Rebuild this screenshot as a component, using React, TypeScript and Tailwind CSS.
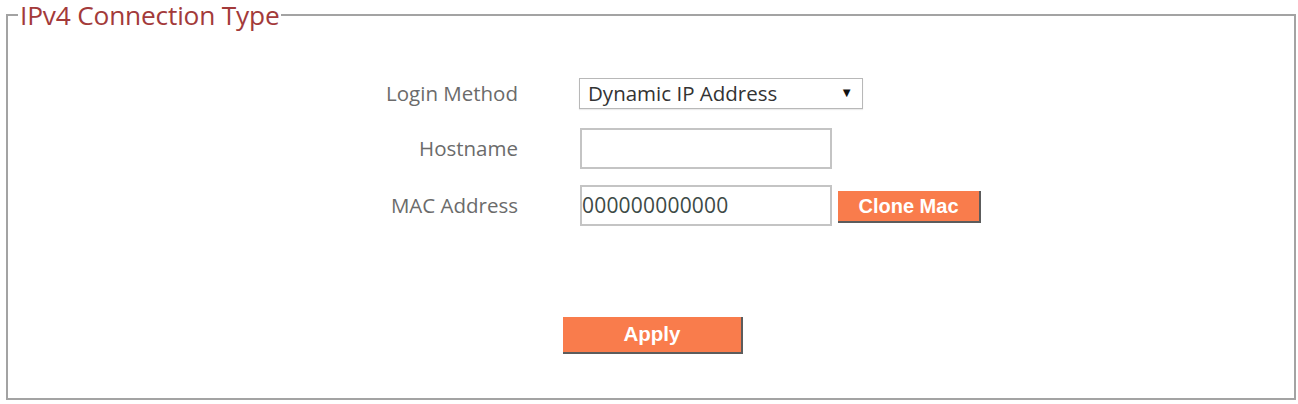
import React from 'react';

export default function App() {
  return (
    <div className="w-[1298px] h-[404px] bg-white pl-[6px] font-['Open_Sans',sans-serif]">
      <fieldset className="w-[1290px] h-[400px] border-2 border-[#a3a3a3] m-0 p-0">
        <legend className="ml-[10px] px-[2px] text-[26.3px] leading-[30px] tracking-[-0.2px] text-[#a33a3a]">
          IPv4 Connection Type
        </legend>

        <div className="mt-[48px] flex items-center h-[30px]">
          <div className="w-[510px] text-right text-[20.5px] text-[#6b6b6b]">Login Method</div>
          <div className="ml-[61px] w-[284px] h-[31px] border border-[#b8b8b8] flex items-center justify-between pl-[8px] pr-[9px] text-[20.5px] text-[#333] shadow-[0_1px_1px_rgba(0,0,0,0.08)]">
            <span>Dynamic IP Address</span>
            <span className="text-[13px] text-[#111]">▼</span>
          </div>
        </div>

        <div className="mt-[20px] flex items-center h-[41px]">
          <div className="w-[510px] text-right text-[20.5px] text-[#6b6b6b]">Hostname</div>
          <div className="ml-[62px] w-[252px] h-[41px] border-2 border-[#c4c4c4] bg-white" />
        </div>

        <div className="mt-[16px] flex items-center h-[41px]">
          <div className="w-[510px] text-right text-[20.5px] text-[#6b6b6b]">MAC Address</div>
          <div className="ml-[62px] w-[252px] h-[41px] border-2 border-[#c4c4c4] bg-white flex items-center text-[21px] text-[#3d4a46] tracking-[0.2px]">
            000000000000
          </div>
          <button className="ml-[6px] mt-[2px] w-[143px] h-[32px] bg-[#f97c4c] text-white font-bold text-[20px] leading-none border-r-2 border-b-2 border-[#5c5c5c] font-['Liberation_Sans',sans-serif]">
            Clone Mac
          </button>
        </div>

        <div className="mt-[91px] flex">
          <button className="ml-[555px] w-[180px] h-[37px] bg-[#f97c4c] text-white font-bold text-[20.5px] leading-none border-r-2 border-b-2 border-[#5c5c5c] font-['Liberation_Sans',sans-serif]">
            Apply
          </button>
        </div>
      </fieldset>
    </div>
  );
}
